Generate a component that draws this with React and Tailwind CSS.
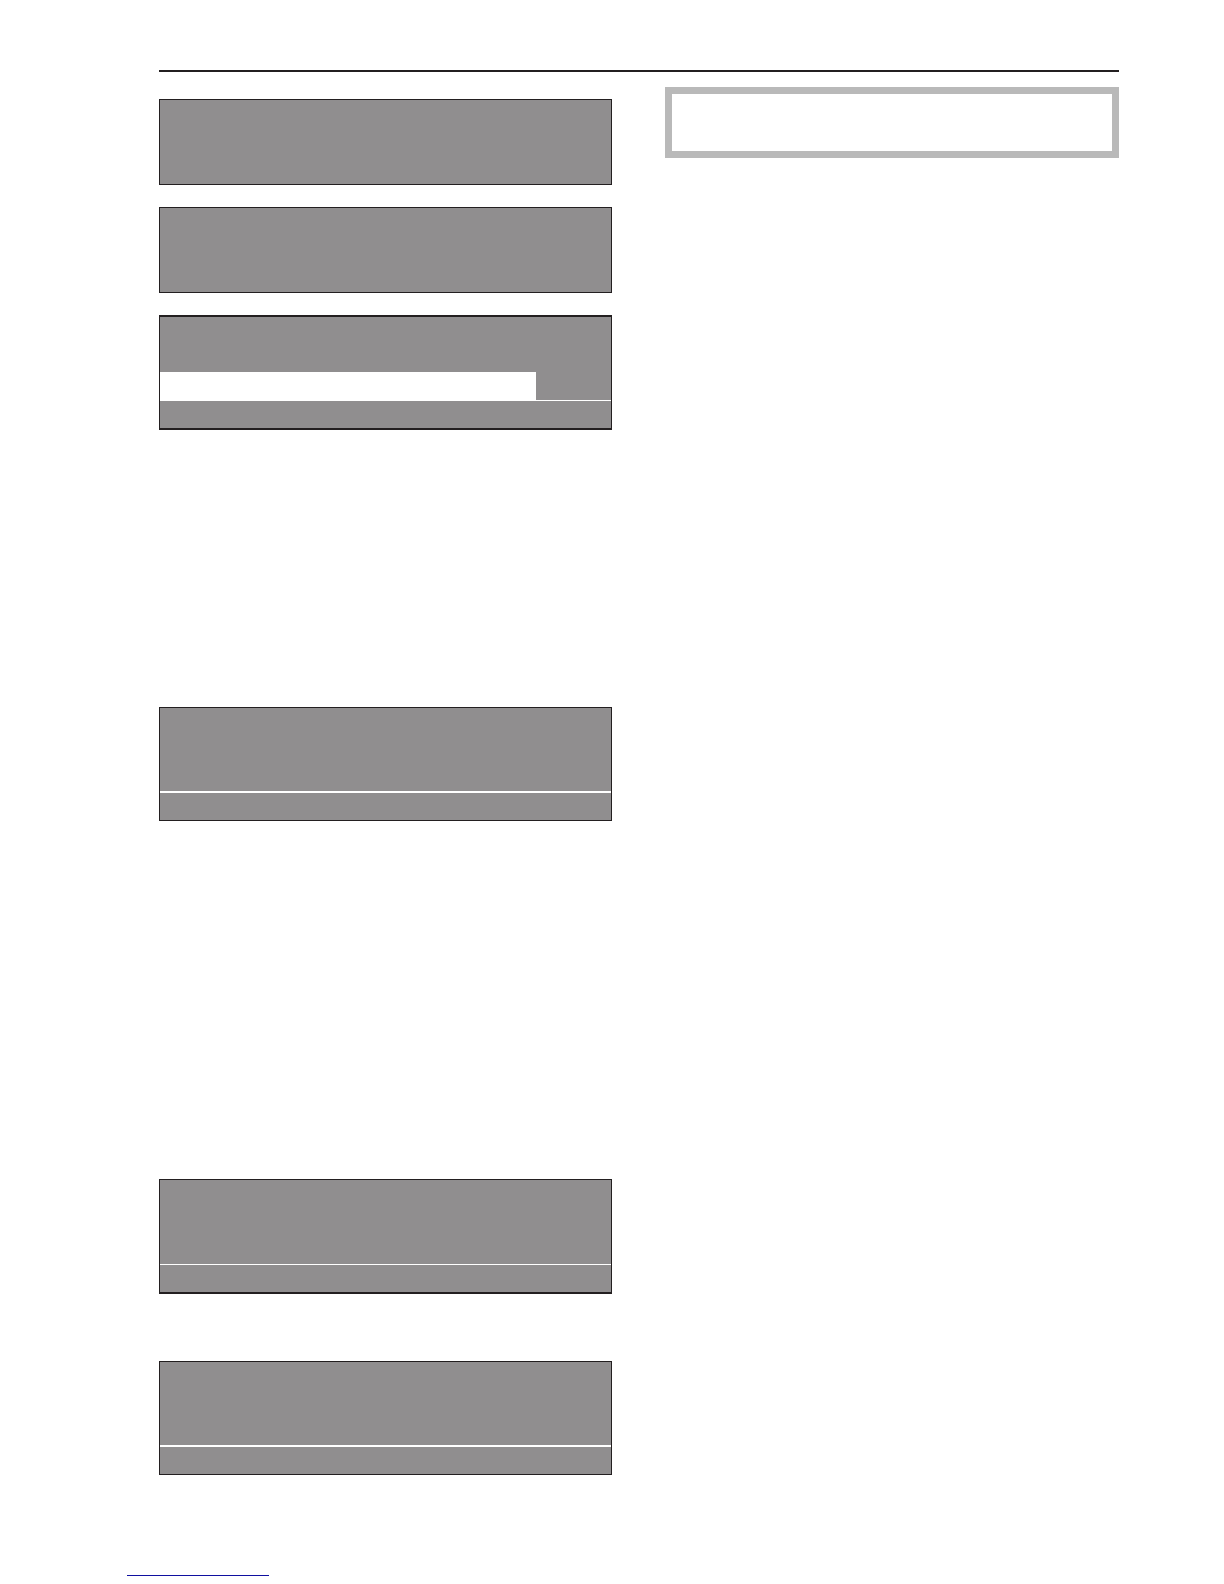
// Gray display panel; the optional footer strip is set off by a white line.
function Panel({ className = "", body = "", footer = "", children }) {
  return (
    <section className={`flex flex-col border-x border-[#231f20] bg-[#908e8f] ${className}`}>
      <div className={body}>{children}</div>
      {footer && <div className={`border-white ${footer}`} />}
    </section>
  );
}

export default function App() {
  return (
    <div className="bg-white font-['Liberation_Sans',sans-serif]">
      <main className="pt-[70px] pr-[105px] pl-[159px]">
        <hr className="border-t-2 border-[#231f20]" />
        <div className="grid grid-cols-[453fr_454fr] items-start gap-x-[53px] pt-[15px]">
          <div className="flex flex-col pt-3">
            <Panel className="border-y" body="h-[84px]" />
            <Panel className="mt-[22px] border-y" body="h-[84px]" />
            <Panel className="mt-[22px] border-y-2" body="pt-[55px]" footer="h-7 border-t">
              <div className="h-7 w-5/6 bg-white" />
            </Panel>
            <Panel className="mt-[277px] border-y" body="h-[83px]" footer="h-[29px] border-t-2" />
            <Panel className="mt-[358px] border-t border-b-2" body="h-[84px]" footer="h-7 border-t" />
            <Panel className="mt-[67px] border-y" body="h-[83px]" footer="h-[29px] border-t-2" />
          </div>
          <aside className="h-[71px] border-[7px] border-[#b9b9b9]" />
        </div>
      </main>
      <footer className="pt-[100px] pb-2 pl-[127px]">
        <div className="h-px w-[142px] bg-[#1010a0]" />
      </footer>
    </div>
  );
}
